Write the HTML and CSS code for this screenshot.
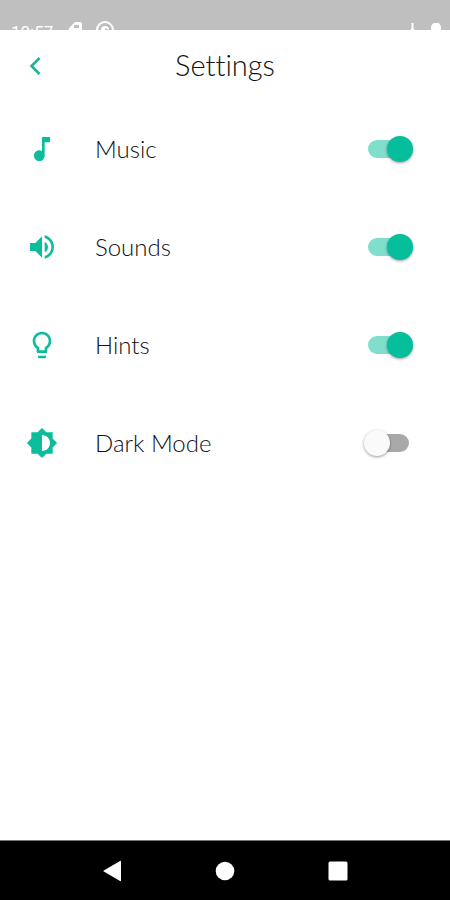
FILE: index.html
```html
<!DOCTYPE html>
<html lang="en">
<head>
<meta charset="utf-8">
<meta name="viewport" content="width=device-width, initial-scale=1">
<title>Settings</title>
<link rel="stylesheet" href="styles.css">
</head>
<body>
<div class="status">
  <div class="status-left">
    <span class="clock">10:57</span>
    <svg class="status-icon" viewBox="0 0 20 20"><path fill="#fff" fill-rule="evenodd" d="M8 2h5q2 0 2 2v14H2V8zM7 5v3h5V5z"/></svg>
    <svg class="status-icon" viewBox="0 0 20 20"><circle cx="10" cy="10" r="8" fill="none" stroke="#fff" stroke-width="2"/><path d="M6 10a4 4 0 0 1 8 0l-4-2v5z" fill="#fff"/></svg>
  </div>
  <div class="status-right">
    <svg class="status-icon" viewBox="0 0 20 20"><path fill="#fff" d="M9.500 3h2v5l6 11H3l6.500-11z"/></svg>
    <svg class="status-icon" viewBox="0 0 20 20"><path fill="#fff" d="M9 3h3q2 0 2 2 1 0 1 2v13H5V7q0-2 1-2 0-2 3-2z"/></svg>
  </div>
</div>
<header class="bar">
  <button class="back" type="button" aria-label="Back"><svg viewBox="0 0 20 20"><path d="M14.500 3L6.500 11L14.500 19" fill="none" stroke="#1bb394" stroke-width="2.500"/></svg></button>
  <h1>Settings</h1>
</header>
<main class="list">
  <div class="row">
    <svg class="icon" viewBox="0 0 24 24"><path d="M12 3v10.550c-.59-.34-1.270-.55-2-.55-2.210 0-4 1.790-4 4s1.790 4 4 4 4-1.790 4-4V7h4V3h-6z"/></svg>
    <label for="music">Music</label>
    <input class="switch" id="music" type="checkbox" checked>
  </div>
  <div class="row">
    <svg class="icon" viewBox="0 0 24 24"><path d="M3 9v6h4l5 5V4L7 9H3zm13.500 3c0-1.770-1.020-3.290-2.500-4.030v8.050c1.480-.73 2.500-2.250 2.500-4.020zM14 3.230v2.060c2.890.86 5 3.540 5 6.710s-2.110 5.850-5 6.710v2.060c4.010-.91 7-4.490 7-8.770s-2.990-7.860-7-8.770z"/></svg>
    <label for="sounds">Sounds</label>
    <input class="switch" id="sounds" type="checkbox" checked>
  </div>
  <div class="row">
    <svg class="icon" viewBox="0 0 24 24"><path d="M9 21c0 .55.45 1 1 1h4c.55 0 1-.45 1-1v-1H9v1zm3-19C8.140 2 5 5.140 5 9c0 2.380 1.190 4.470 3 5.740V17c0 .55.45 1 1 1h6c.55 0 1-.45 1-1v-2.260c1.810-1.270 3-3.360 3-5.740 0-3.860-3.140-7-7-7zm2.850 11.100l-.85.6V16h-4v-2.300l-.85-.6C7.800 12.160 7 10.630 7 9c0-2.760 2.240-5 5-5s5 2.240 5 5c0 1.630-.8 3.160-2.150 4.100z"/></svg>
    <label for="hints">Hints</label>
    <input class="switch" id="hints" type="checkbox" checked>
  </div>
  <div class="row">
    <svg class="icon" viewBox="0 0 24 24"><path d="M20 15.310L23.310 12 20 8.690V4h-4.690L12 .69 8.690 4H4v4.690L.69 12 4 15.310V20h4.690L12 23.310 15.310 20H20v-4.690zM12 18V6c3.310 0 6 2.690 6 6s-2.690 6-6 6z"/></svg>
    <label for="dark">Dark Mode</label>
    <input class="switch" id="dark" type="checkbox">
  </div>
</main>
<nav class="nav" aria-label="System">
  <button type="button" aria-label="Back"><svg viewBox="0 0 24 24"><path d="M3 12L20 2q1-.5 1 .5v19q0 1-1 .5z"/></svg></button>
  <button type="button" aria-label="Home"><svg viewBox="0 0 24 24"><circle cx="12" cy="12" r="9.300"/></svg></button>
  <button type="button" aria-label="Recent apps"><svg viewBox="0 0 24 24"><rect x="2.500" y="2.500" width="19" height="19" rx="1.500"/></svg></button>
</nav>
</body>
</html>
```
FILE: styles.css
```css
* { box-sizing: border-box; }
body {
  margin: 0;
  min-height: 100vh;
  display: flex;
  flex-direction: column;
  background: #fff;
  color: #111;
  font-family: Lato, "Open Sans", sans-serif;
  font-weight: 300;
  font-variant-ligatures: none;
}
button { border: 0; padding: 0; background: none; }
svg { display: block; }
.status {
  height: 30px;
  padding: 20px 4px 0 11px;
  display: flex;
  justify-content: space-between;
  overflow: hidden;
  background: #bfbfbf;
  color: #fff;
}
.status-left, .status-right { display: flex; }
.status-left { gap: 8px; }
.status-right { gap: 4px; }
.status-icon { width: 20px; height: 20px; }
.clock {
  width: 48px;
  font: 400 17px/24px Roboto, sans-serif;
}
.bar {
  height: 70px;
  padding: 0 25px;
  display: grid;
  grid-template-columns: 20px 1fr 20px;
  align-items: center;
}
.back, .back svg { width: 20px; height: 20px; }
h1 {
  margin: 0;
  font-size: 29px;
  font-weight: 300;
  line-height: 36px;
  text-align: center;
}
.list {
  padding: 0 37px 0 26px;
  display: grid;
  grid-auto-rows: 98px;
}
.row {
  display: grid;
  grid-template-columns: 32px 1fr 49px;
  column-gap: 37px;
  align-items: center;
}
.icon { width: 32px; height: 32px; fill: #0bbd9a; }
.row label {
  font-size: 24px;
  line-height: 32px;
}
.switch {
  appearance: none;
  position: relative;
  width: 49px;
  height: 26px;
  margin: 0;
}
.switch::before {
  content: "";
  position: absolute;
  inset: 4px;
  border-radius: 9px;
  background: #a9a9a9;
}
.switch::after {
  content: "";
  position: absolute;
  top: 0;
  left: 0;
  width: 26px;
  height: 26px;
  border-radius: 50%;
  background: #fafafa;
  box-shadow: 0 1px 3px rgba(0, 0, 0, 0.4);
}
.switch:checked::before { background: #80dfcc; }
.switch:checked::after { left: auto; right: 0; background: #05be9b; }
.nav {
  height: 60px;
  margin-top: auto;
  padding: 0 56px;
  display: grid;
  grid-template-columns: repeat(3, 1fr);
  place-items: center;
  border-top: 1px solid #777;
  background: #000;
}
.nav svg { width: 24px; height: 24px; fill: #fff; }
```
